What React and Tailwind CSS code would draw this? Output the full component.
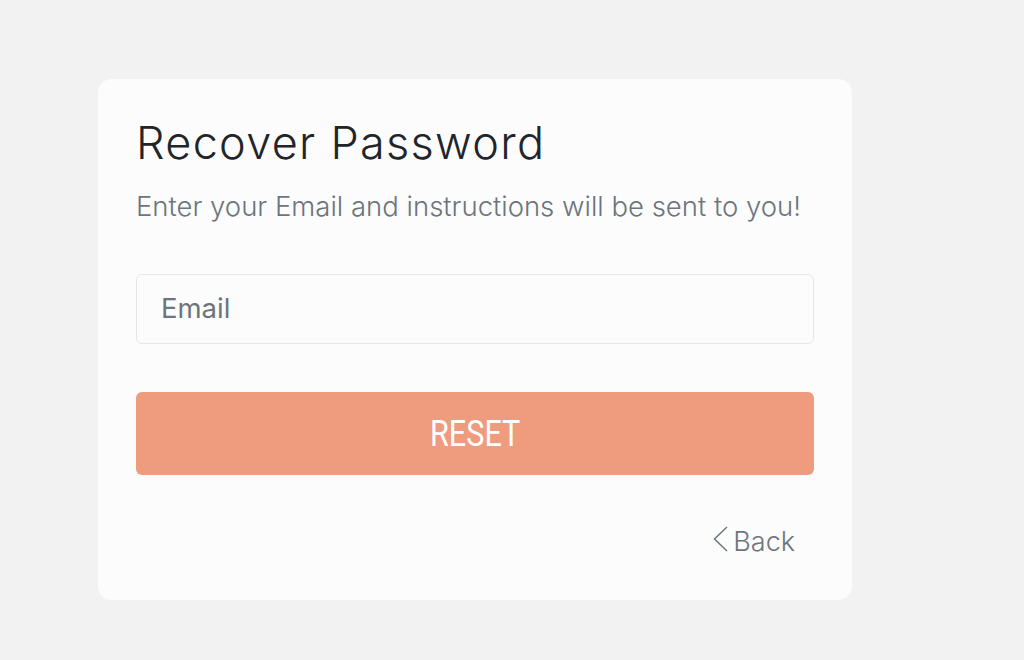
import React from "react";

export default function App() {
  return (
    <div className="min-h-[660px] w-full bg-[#f2f2f2] pt-[79px] pl-[98px]" style={{ fontFamily: "Inter, 'Noto Sans', sans-serif" }}>
      <div className="w-[754px] rounded-[14px] bg-[#fcfcfc] px-[38px] pt-[37px] pb-[41px]">
        <h1 className="text-[45px] leading-[54px] font-light text-[#212529] tracking-[1.3px]">Recover Password</h1>
        <p className="mt-[19px] text-[27.5px] leading-[34px] font-light text-[#6c757d]">
          Enter your Email and instructions will be sent to you!
        </p>
        <div className="mt-[51px] flex h-[70px] items-center rounded-[6px] border border-[#e6e6e6] bg-[#fcfcfc] px-[24px]">
          <span className="text-[27.5px] text-[#6c757d]">Email</span>
        </div>
        <button className="mt-[48px] flex h-[83px] w-full items-center justify-center rounded-[6px] bg-[#ef9b7e] text-white" style={{ fontFamily: "Roboto, sans-serif" }}>
          <span className="inline-block scale-x-[0.85] text-[36px] leading-[40px]">RESET</span>
        </button>
        <div className="mt-[50px] flex justify-end pr-[19px]">
          <div className="flex items-center gap-[5px] text-[#6c757d]">
            <svg width="15" height="26" viewBox="0 0 15 26" fill="none" stroke="currentColor" strokeWidth="1.5" className="-mt-[6px]">
              <path d="M14 1 L1.5 13 L14 25" />
            </svg>
            <span className="text-[27px] leading-[34px] font-light">Back</span>
          </div>
        </div>
      </div>
    </div>
  );
}
